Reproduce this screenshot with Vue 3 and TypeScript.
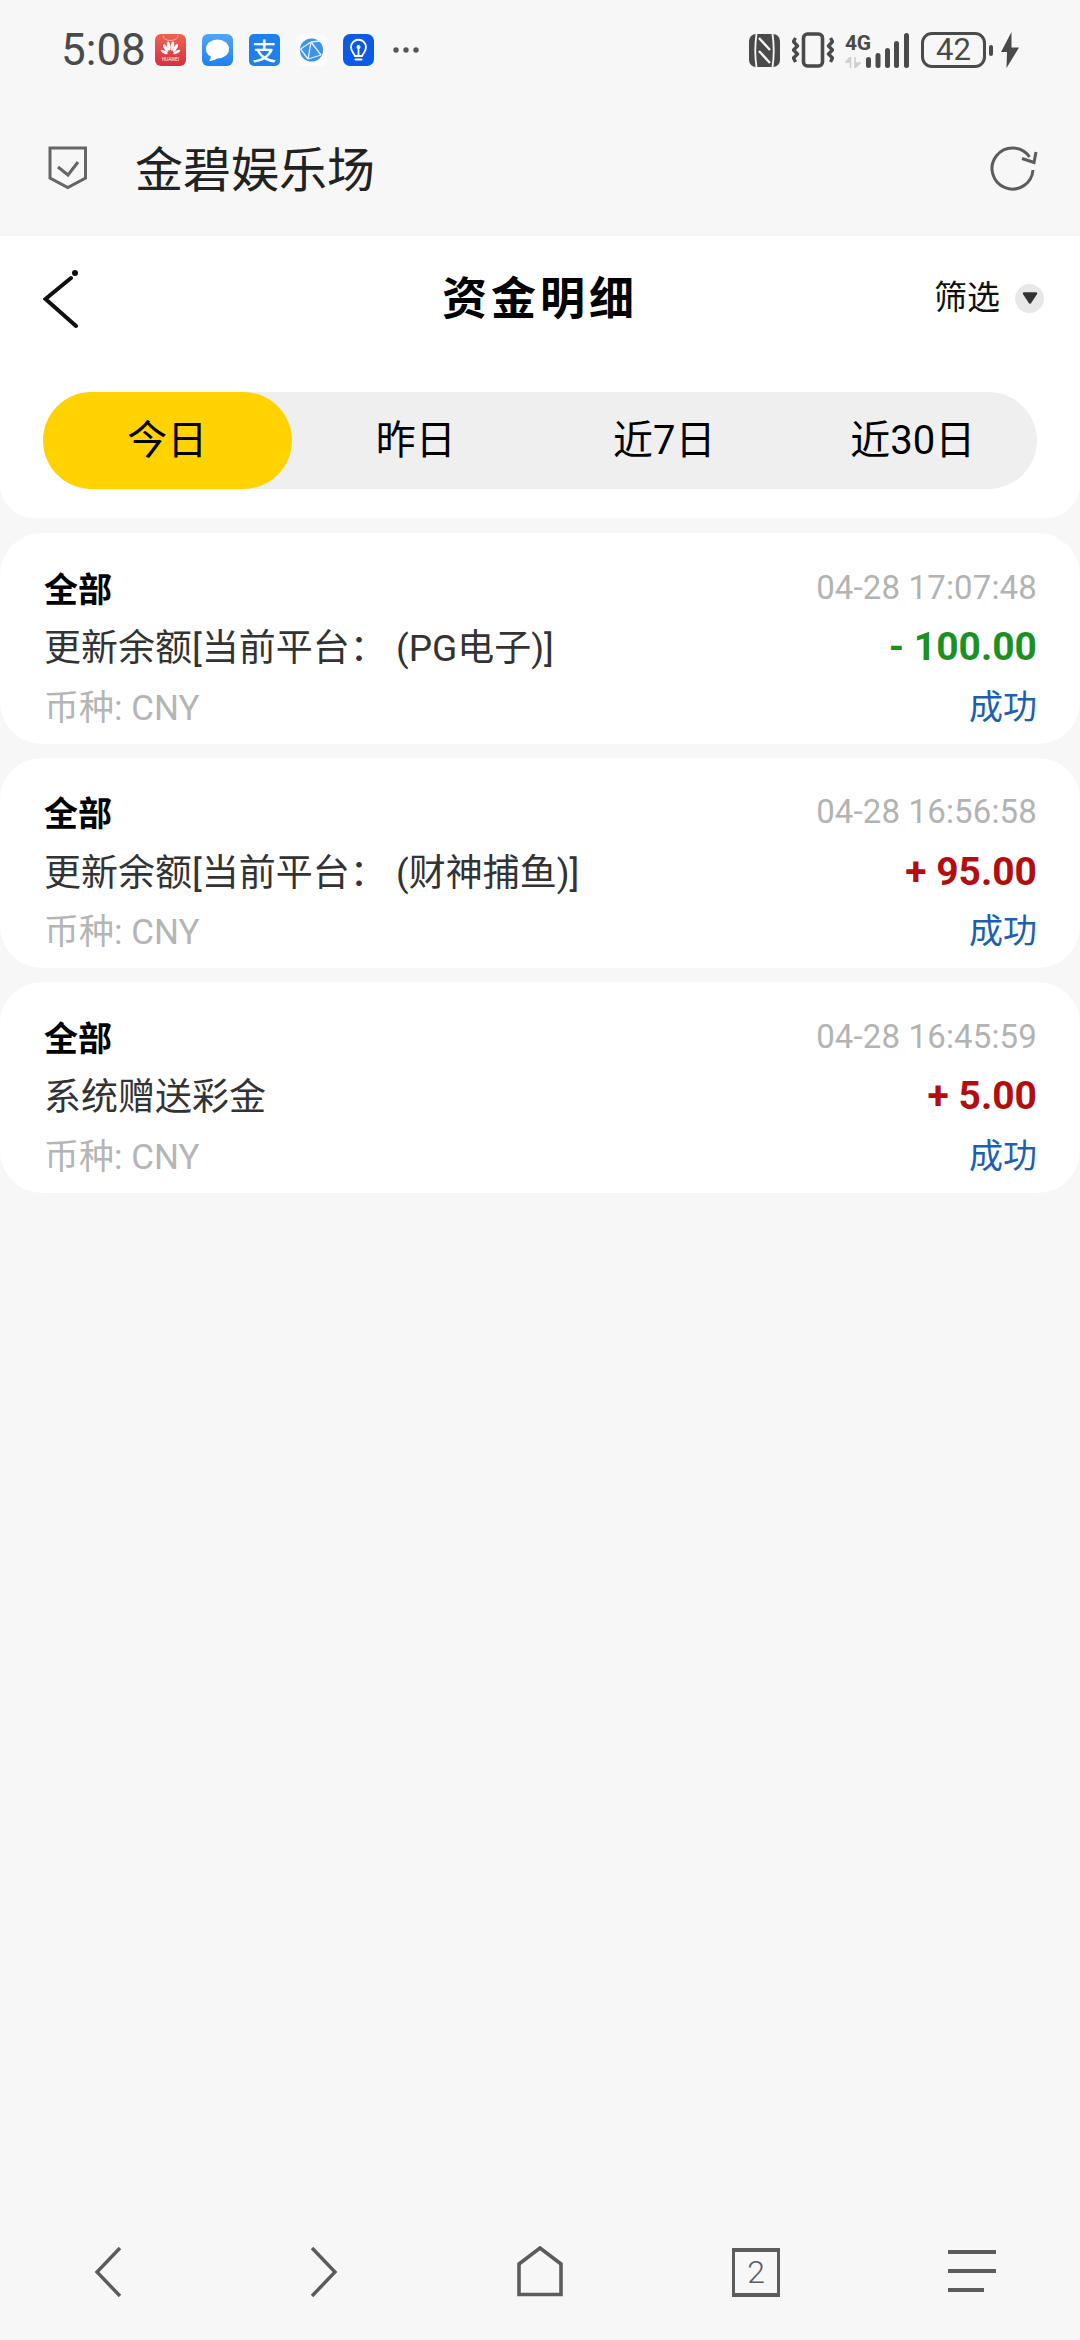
<script setup lang="ts">
interface Row {
  desc: string
  time: string
  amount: string
  tone: 'minus' | 'plus'
}
const tabs: string[] = ['今日', '昨日', '近7日', '近30日']
const rows: Row[] = [
  { desc: '更新余额[当前平台： (PG电子)]', time: '04-28 17:07:48', amount: '- 100.00', tone: 'minus' },
  { desc: '更新余额[当前平台： (财神捕鱼)]', time: '04-28 16:56:58', amount: '+ 95.00', tone: 'plus' },
  { desc: '系统赠送彩金', time: '04-28 16:45:59', amount: '+ 5.00', tone: 'plus' },
]
</script>

<template>
  <div class="page">
    <div class="status">
      <div class="status-left">
        <span class="clock">5:08</span>
        <div class="apps">
          <svg class="app" width="31" height="32" viewBox="0 0 31 32">
            <defs>
              <linearGradient id="hw" x1="0" y1="0" x2="0" y2="1">
                <stop offset="0" stop-color="#ee6352" />
                <stop offset="1" stop-color="#d92f3f" />
              </linearGradient>
            </defs>
            <rect width="31" height="32" rx="6" fill="url(#hw)" />
            <path d="M8 1.5a7.5 5 0 0 0 15 0" fill="none" stroke="#f6b0a4" stroke-width="1" />
            <g fill="#fff">
              <ellipse cx="13.6" cy="12" rx="1.7" ry="4.6" transform="rotate(-8 13.6 12)" />
              <ellipse cx="17.4" cy="12" rx="1.7" ry="4.6" transform="rotate(8 17.4 12)" />
              <ellipse cx="10.6" cy="14" rx="1.6" ry="4.4" transform="rotate(-30 10.6 14)" />
              <ellipse cx="20.4" cy="14" rx="1.6" ry="4.4" transform="rotate(30 20.4 14)" />
              <ellipse cx="9.2" cy="18" rx="1.4" ry="3.8" transform="rotate(-62 9.2 18)" />
              <ellipse cx="21.8" cy="18" rx="1.4" ry="3.8" transform="rotate(62 21.8 18)" />
            </g>
            <text x="15.5" y="27" text-anchor="middle" font-size="4.6" fill="#fff" font-family="Roboto, sans-serif">HUAWEI</text>
          </svg>
          <svg class="app" width="31" height="32" viewBox="0 0 31 32">
            <defs>
              <linearGradient id="msg" x1="0" y1="0" x2="0" y2="1">
                <stop offset="0" stop-color="#52a6f7" />
                <stop offset="1" stop-color="#1f80f0" />
              </linearGradient>
            </defs>
            <rect width="31" height="32" rx="6" fill="url(#msg)" />
            <ellipse cx="15.5" cy="15" rx="11.5" ry="9.5" fill="#fff" />
            <path d="M9 21 C9 24 8 26 7 27 C11 27 14 25.5 16 23.5 Z" fill="#fff" />
          </svg>
          <div class="alipay">支</div>
          <svg class="app globe" width="31" height="32" viewBox="0 0 31 32">
            <rect width="31" height="32" rx="6" fill="#fbfbfb" />
            <circle cx="15.5" cy="16" r="11.6" fill="#3e93ef" />
            <path d="M4.5 15 L15 8 M15 8 L24 7 M15 8 L12 25 M4.5 15 L12 25 M12 25 L25 21 M15 8 L25 21" fill="none" stroke="#e8f3fe" stroke-width="1.3" />
          </svg>
          <svg class="app" width="31" height="32" viewBox="0 0 31 32">
            <rect width="31" height="32" rx="7" fill="#0c5ae6" />
            <path d="M11.8 22 C11.5 19.5 8 18 8 13.2 A7.5 7.5 0 0 1 23 13.2 C23 18 19.5 19.5 19.2 22 Z" fill="none" stroke="#fff" stroke-width="1.9" stroke-linejoin="round" />
            <path d="M12.5 25.5 H18.5" stroke="#fff" stroke-width="2" stroke-linecap="round" />
            <path d="M15.5 21 V14" stroke="#fff" stroke-width="1.7" />
            <circle cx="15.5" cy="13" r="2" fill="#fff" />
          </svg>
          <svg class="more" width="26" height="6" viewBox="0 0 26 6">
            <circle cx="3" cy="3" r="2.7" fill="#555" />
            <circle cx="13" cy="3" r="2.7" fill="#555" />
            <circle cx="23" cy="3" r="2.7" fill="#555" />
          </svg>
        </div>
      </div>
      <div class="status-right">
        <svg width="31" height="33" viewBox="0 0 31 33">
          <rect width="31" height="33" rx="7" fill="#4a4a4a" />
          <path d="M7.5 0 C6 10 6 23 7.5 33 M23.5 0 C25 10 25 23 23.5 33" fill="none" stroke="#f7f7f7" stroke-width="1.8" />
          <path d="M10 4 L21 16 M10 17 L21 29" fill="none" stroke="#f7f7f7" stroke-width="2.4" />
        </svg>
        <svg class="vibrate" width="42" height="36" viewBox="0 0 42 36">
          <rect x="11.5" y="2" width="19" height="32" rx="4" fill="none" stroke="#4a4a4a" stroke-width="3.6" />
          <path d="M3.5 6 L1.5 9.5 L5.5 14 L1.5 18 L5.5 22 L1.5 26 L3.5 30" fill="none" stroke="#4a4a4a" stroke-width="3.4" stroke-linejoin="round" />
          <path d="M38.5 6 L40.5 9.5 L36.5 14 L40.5 18 L36.5 22 L40.5 26 L38.5 30" fill="none" stroke="#4a4a4a" stroke-width="3.4" stroke-linejoin="round" />
        </svg>
        <div class="net">
          <div class="net-label">
            <span class="four-g">4G</span>
            <svg width="16" height="11" viewBox="0 0 16 11">
              <path d="M5.5 11 V0 L1 5 H5.5 M10 0 V11 L15 6 H10" fill="#cfcfcf" stroke="#cfcfcf" stroke-width="1.6" />
            </svg>
          </div>
          <svg class="bars" width="43" height="35" viewBox="0 0 43 35">
            <rect x="0" y="24" width="5" height="11" rx="2.5" fill="#4a4a4a" />
            <rect x="9.5" y="20" width="5" height="15" rx="2.5" fill="#4a4a4a" />
            <rect x="19" y="15" width="5" height="20" rx="2.5" fill="#4a4a4a" />
            <rect x="28" y="8" width="5" height="27" rx="2.5" fill="#4a4a4a" />
            <rect x="38" y="0" width="5" height="35" rx="2.5" fill="#4a4a4a" />
          </svg>
        </div>
        <div class="battery-wrap">
          <div class="battery">42</div>
          <span class="battery-cap"></span>
        </div>
        <svg width="18" height="36" viewBox="0 0 18 36">
          <path d="M10.5 0 L0 20 H6 L5.5 36 L18 15.5 H10.5 Z" fill="#4a4a4a" />
        </svg>
      </div>
    </div>

    <div class="browser">
      <svg width="40" height="44" viewBox="0 0 40 44">
        <path d="M2 2 H37.5 V32 L19.8 41.5 L2 32 Z" fill="none" stroke="#666" stroke-width="3" />
        <path d="M10 21 L20 29 L30 16" fill="none" stroke="#666" stroke-width="3" />
      </svg>
      <span class="site">金碧娱乐场</span>
      <svg class="reload" width="48" height="46" viewBox="0 0 48 46">
        <path d="M43 25 A20.5 20.5 0 1 1 39.5 12" fill="none" stroke="#5c5c5c" stroke-width="3" />
        <path d="M46 7 L44 17.5 L32 13.5" fill="none" stroke="#5c5c5c" stroke-width="3" />
      </svg>
    </div>

    <div class="panel">
      <div class="topbar">
        <svg width="40" height="64" viewBox="0 0 40 64">
          <path d="M33 60 L2.5 33 L28 12" fill="none" stroke="#111" stroke-width="4" stroke-linecap="round" />
          <circle cx="32" cy="7" r="3" fill="#111" />
        </svg>
        <h1 class="title">资金明细</h1>
        <div class="filter">
          <span>筛选</span>
          <span class="filter-dot">
            <svg width="16" height="14" viewBox="0 0 16 14">
              <path d="M2 2.5 H14 L8 11.5 Z" fill="#333" stroke="#333" stroke-width="2.4" stroke-linejoin="round" />
            </svg>
          </span>
        </div>
      </div>
      <div class="tabs">
        <div v-for="(tab, i) in tabs" :key="tab" class="tab" :class="{ active: i === 0 }">{{ tab }}</div>
      </div>
    </div>

    <div class="list">
      <div v-for="row in rows" :key="row.time" class="card">
        <div class="line">
          <span class="kind">全部</span>
          <span class="time">{{ row.time }}</span>
        </div>
        <div class="line">
          <span class="desc">{{ row.desc }}</span>
          <span class="amount" :class="row.tone">{{ row.amount }}</span>
        </div>
        <div class="line last">
          <span class="currency">币种: CNY</span>
          <span class="state">成功</span>
        </div>
      </div>
    </div>

    <div class="nav">
      <svg width="30" height="52" viewBox="0 0 30 52">
        <path d="M27 2 L4 26 L27 50" fill="none" stroke="#5c5c5c" stroke-width="3.4" />
      </svg>
      <svg width="30" height="52" viewBox="0 0 30 52">
        <path d="M3 2 L26 26 L3 50" fill="none" stroke="#5c5c5c" stroke-width="3.4" />
      </svg>
      <svg width="46" height="52" viewBox="0 0 46 52">
        <path d="M2 18 L23 2 L44 18 V48.5 H2 Z" fill="none" stroke="#5c5c5c" stroke-width="3.6" />
      </svg>
      <div class="count">2</div>
      <svg width="48" height="46" viewBox="0 0 48 46">
        <path d="M0 3 H48 M0 22 H48 M0 41 H36" fill="none" stroke="#5c5c5c" stroke-width="4" />
      </svg>
    </div>
  </div>
</template>

<style scoped>
.page {
  width: 1080px;
  height: 2340px;
  display: flex;
  flex-direction: column;
  background: #f7f7f7;
  font-family: Roboto, "Noto Sans CJK SC", sans-serif;
  overflow: hidden;
}
.status {
  height: 100px;
  padding: 0 61px 0 61px;
  display: flex;
  align-items: center;
  justify-content: space-between;
  color: #4a4a4a;
}
.status-left {
  display: flex;
  align-items: center;
  gap: 9px;
}
.clock {
  font-size: 44px;
  line-height: 48px;
  color: #4a4a4a;
}
.apps {
  display: flex;
  align-items: center;
  gap: 16px;
}
.alipay {
  width: 31px;
  height: 32px;
  border-radius: 5px;
  background: #1f7fec;
  color: #fff;
  font-family: "Noto Sans CJK SC", sans-serif;
  font-size: 24px;
  font-weight: 500;
  line-height: 32px;
  text-align: center;
}
.more {
  margin-left: 3px;
}
.status-right {
  display: flex;
  align-items: center;
  gap: 12px;
}
.net {
  display: flex;
  align-items: flex-end;
  margin-left: -1px;
}
.net-label {
  width: 21px;
  height: 35px;
  display: flex;
  flex-direction: column;
  justify-content: space-between;
}
.four-g {
  font-size: 21px;
  line-height: 20px;
  font-weight: 700;
  letter-spacing: -0.3px;
  white-space: nowrap;
}
.battery-wrap {
  display: flex;
  align-items: center;
  gap: 3px;
  margin-right: -4px;
}
.battery {
  width: 65px;
  height: 36px;
  box-sizing: border-box;
  border: 3px solid #4a4a4a;
  border-radius: 11px;
  display: flex;
  align-items: center;
  justify-content: center;
  font-size: 31px;
  line-height: 30px;
  font-weight: 400;
}
.battery-cap {
  width: 4px;
  height: 11px;
  border-radius: 2px;
  background: #4a4a4a;
}
.browser {
  height: 136px;
  padding: 0 42px 0 48px;
  display: flex;
  align-items: center;
  box-sizing: border-box;
}
.site {
  margin-left: 47px;
  font-size: 48px;
  line-height: 60px;
  margin-top: -5px;
  color: #222;
  font-family: "Noto Sans CJK SC", sans-serif;
}
.reload {
  margin-left: auto;
}
.panel {
  background: #fff;
  border-radius: 0 0 34px 34px;
  padding: 0 43px 29px;
}
.topbar {
  height: 124px;
  display: grid;
  grid-template-columns: 1fr auto 1fr;
  align-items: center;
}
.title {
  margin: -5px 0 0;
  font-size: 45px;
  line-height: 60px;
  letter-spacing: 4px;
  font-weight: 700;
  color: #000;
  font-family: "Noto Sans CJK SC", sans-serif;
}
.filter {
  justify-self: end;
  margin-right: -7px;
  display: flex;
  align-items: center;
  gap: 15px;
  font-size: 33px;
  line-height: 44px;
  color: #111;
}
.filter-dot {
  width: 29px;
  height: 29px;
  border-radius: 50%;
  background: #e8e8e8;
  display: flex;
  align-items: center;
  justify-content: center;
}
.tabs {
  margin-top: 32px;
  height: 97px;
  border-radius: 49px;
  background: #efefef;
  display: grid;
  grid-template-columns: repeat(4, 1fr);
}
.tab {
  display: flex;
  align-items: center;
  justify-content: center;
  border-radius: 49px;
  padding-bottom: 7px;
  box-sizing: border-box;
  font-size: 40px;
  color: #000;
}
.tab.active {
  background: #ffd200;
}
.list {
  margin-top: 15px;
  display: flex;
  flex-direction: column;
  gap: 14px;
}
.card {
  height: 210.5px;
  box-sizing: border-box;
  padding: 25px 43px 0 44px;
  background: #fff;
  border-radius: 42px;
}
.line {
  height: 58px;
  display: flex;
  align-items: center;
  justify-content: space-between;
  white-space: nowrap;
}
.line.last {
  margin-top: 1px;
}
.kind {
  font-size: 34px;
  font-weight: 700;
  color: #000;
}
.time {
  font-size: 33px;
  letter-spacing: 0.15px;
  color: #b3b3b3;
}
.desc {
  font-size: 37px;
  color: #333;
}
.amount {
  padding-top: 4px;
  font-size: 39px;
  font-weight: 700;
}
.amount.minus {
  color: #1a9122;
}
.amount.plus {
  color: #b30d0d;
}
.currency {
  font-size: 35px;
  color: #b5b5b5;
}
.state {
  font-size: 34px;
  color: #1a5fb4;
}
.nav {
  margin-top: auto;
  height: 136px;
  display: grid;
  grid-template-columns: repeat(5, 1fr);
  align-items: center;
  justify-items: center;
}
.count {
  width: 48px;
  height: 49px;
  box-sizing: border-box;
  border: 3px solid #5c5c5c;
  border-top-width: 4px;
  border-bottom-width: 4px;
  display: flex;
  align-items: center;
  justify-content: center;
  font-size: 32px;
  font-weight: 300;
  color: #5c5c5c;
}
</style>
